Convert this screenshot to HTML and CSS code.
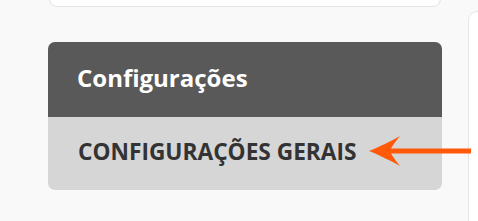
FILE: index.html
```html
<!doctype html>
<html lang="pt">
<head>
    <meta charset="UTF-8">
    <title>Configurações</title>
    <link rel="stylesheet" href="styles.css">
</head>
<body>
<div class="page">
    <div class="main">
        <div class="topcard"></div>
        <div class="menu">
            <div class="menu-title">Configurações</div>
            <a href="#gerais" class="menu-item">CONFIGURAÇÕES GERAIS</a>
        </div>
    </div>
    <div class="side"></div>
    <svg class="arrow" width="102" height="34" viewBox="0 0 102 34">
        <path d="M0 16 C10 12 22 6 31 1 C27 6 24 10 22 13.5 L102 13.5 L102 18.5 L22 18.5 C24 22 27 26 31 31 C22 26 10 20 0 16 Z" fill="#ff5a0a"/>
    </svg>
</div>
</body>
</html>
```

FILE: styles.css
```css
html, body {
    margin: 0;
    padding: 0;
    width: 100%;
    height: 100%;
    overflow: hidden;
    background: #f9f9f9;
    font-family: "Open Sans", "Liberation Sans", sans-serif;
}

.page {
    position: relative;
    display: flex;
    padding-left: 48px;
}

.main {
    width: 394px;
}

.topcard {
    height: 60px;
    margin: -55px 1px 0 1px;
    background: #fff;
    border: 1px solid #e4e4e4;
    border-radius: 8px;
}

.menu {
    margin-top: 35px;
    border-radius: 7px;
    overflow: hidden;
    background: #d6d6d6;
}

.menu-title {
    height: 75px;
    line-height: 72px;
    padding-left: 29px;
    background: #595959;
    color: #fff;
    font-size: 24px;
    font-weight: bold;
}

.menu-item {
    display: block;
    height: 73px;
    line-height: 70px;
    padding-left: 30px;
    color: #333;
    font-size: 22.7px;
    font-weight: bold;
    text-decoration: none;
}

.side {
    flex: 1;
    height: 210px;
    margin: 11px 0 0 26px;
    background: #fff;
    border: 1px solid #e6e6e6;
    border-right: none;
    border-radius: 9px 0 0 0;
}

.arrow {
    position: absolute;
    left: 369px;
    top: 135px;
}
```
